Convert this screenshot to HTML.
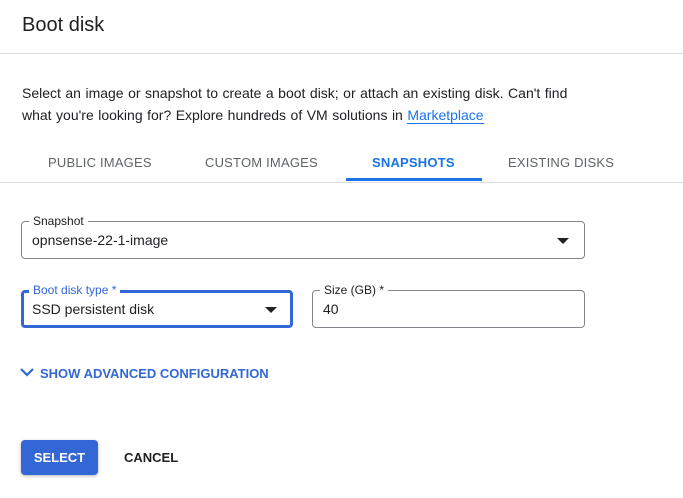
<!DOCTYPE html>
<html><head><style>
body{margin:0;width:683px;height:498px;background:#fff;font-family:"Liberation Sans",sans-serif;color:#202124;position:relative;overflow:hidden}
.a{position:absolute}
.f{position:absolute;border:1px solid #80868b;border-radius:4px;box-sizing:border-box}
.lbl{position:absolute;top:-8px;left:7px;background:#fff;padding:0 4px;font-size:12px;line-height:14px}
.val{position:absolute;left:10px;font-size:14px}
.tri{position:absolute;width:0;height:0;border-left:6px solid transparent;border-right:6px solid transparent;border-top:6px solid #202124}
.tab{position:absolute;top:155px;font-size:13px;color:#5f6368;letter-spacing:.2px}
</style></head><body>
<div class="a" style="left:22px;top:14px;font-size:20px">Boot disk</div>
<div class="a" style="left:0;top:53px;width:683px;height:1px;background:#dadce0"></div>
<div class="a" style="left:22px;top:82px;font-size:14px;line-height:22px;width:560px;word-spacing:.6px">Select an image or snapshot to create a boot disk; or attach an existing disk. Can't find what you're looking for? Explore hundreds of VM solutions in <span style="color:#1a73e8;border-bottom:1px solid #1a73e8">Marketplace</span></div>
<div class="tab" style="left:48px">PUBLIC IMAGES</div>
<div class="tab" style="left:205px">CUSTOM IMAGES</div>
<div class="tab" style="left:372px;color:#1a73e8;font-weight:bold">SNAPSHOTS</div>
<div class="tab" style="left:508px">EXISTING DISKS</div>
<div class="a" style="left:346px;top:178px;width:136px;height:3px;background:#1a73e8"></div>
<div class="a" style="left:0;top:182px;width:683px;height:1px;background:#dadce0"></div>
<div class="f" style="left:21px;top:221px;width:564px;height:38px"><div class="lbl">Snapshot</div><div class="val" style="top:10px">opnsense-22-1-image</div><div class="tri" style="left:535px;top:16px"></div></div>
<div class="f" style="left:21px;top:290px;width:272px;height:38px;border:3px solid #3367d6"><div class="lbl" style="top:-10px;left:5px;color:#3367d6">Boot disk type *</div><div class="val" style="top:8px;left:8px">SSD persistent disk</div><div class="tri" style="left:241px;top:14px"></div></div>
<div class="f" style="left:312px;top:290px;width:273px;height:38px"><div class="lbl">Size (GB) *</div><div class="val" style="top:10px">40</div></div>
<svg class="a" style="left:19px;top:366px" width="16" height="12"><path d="M2 3l6 6 6-6" stroke="#3367d6" stroke-width="2.2" fill="none"/></svg>
<div class="a" style="left:40px;top:366px;font-size:13px;font-weight:bold;color:#3367d6">SHOW ADVANCED CONFIGURATION</div>
<div class="a" style="left:21px;top:440px;width:77px;height:35px;background:#3367d6;border-radius:4px;box-shadow:0 1px 3px rgba(0,0,0,.3);color:#fff;font-size:13px;font-weight:bold;text-align:center;line-height:35px">SELECT</div>
<div class="a" style="left:124px;top:450px;font-size:13px;font-weight:bold;color:#202124">CANCEL</div>
</body></html>
